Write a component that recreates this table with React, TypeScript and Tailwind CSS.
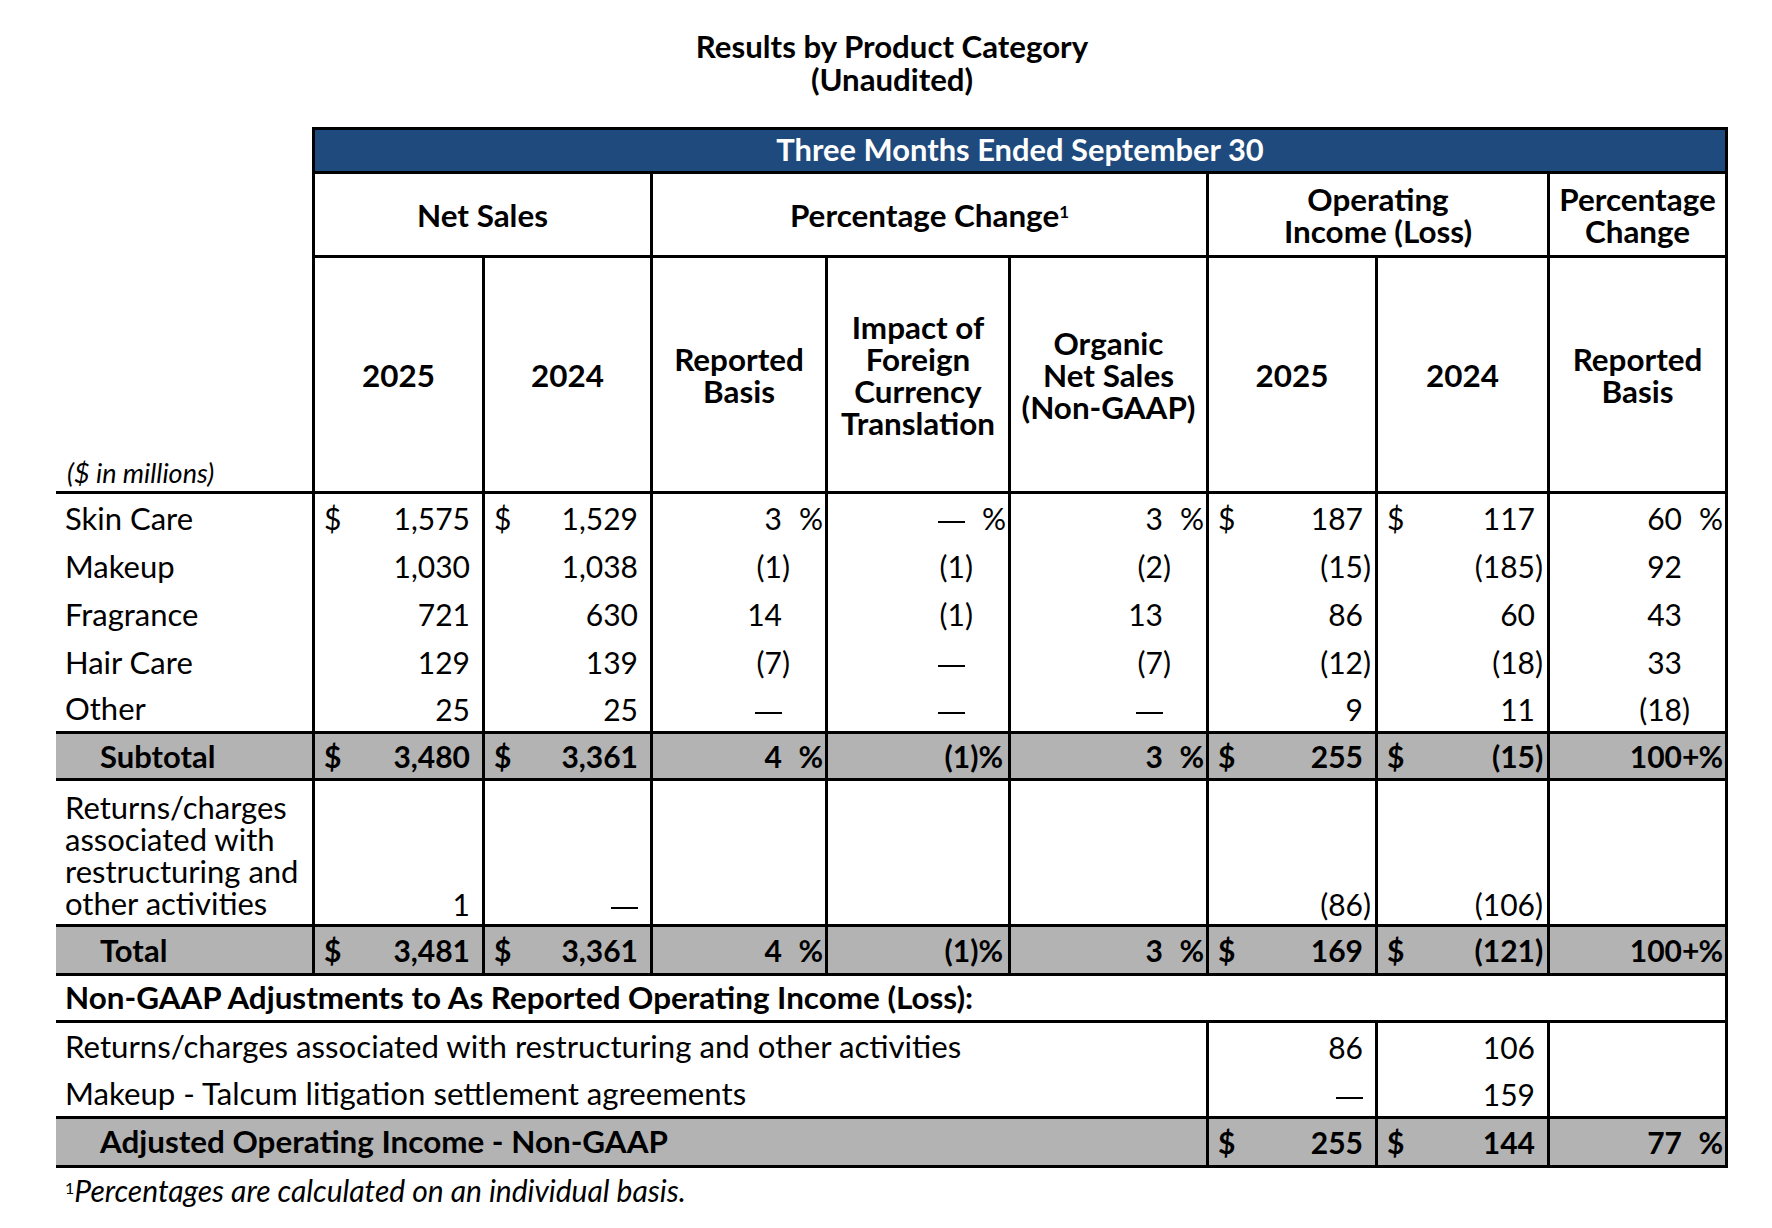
import React from "react";

type Row = {
  label: React.ReactNode;
  v: string[];
  dollar?: boolean;
  pct?: boolean;
  bold?: boolean;
  grey?: boolean;
  bottom?: boolean;
  tall?: boolean;
  indent?: boolean;
};

const PCT_COLS = [2, 3, 4, 7];
const DOLLAR_COLS = [0, 1, 5, 6];

function Dash() {
  return <span className="inline-block w-[27px] h-[2px] bg-black align-middle" />;
}

function ValueCell({
  v,
  dollar,
  pctCol,
  showPct,
  grey,
  bottom,
  tall,
}: {
  v: string;
  dollar: boolean;
  pctCol: boolean;
  showPct: boolean;
  grey?: boolean;
  bottom?: boolean;
  tall?: boolean;
}) {
  let main = v;
  let paren = "";
  if (v.endsWith(")")) {
    main = v.slice(0, -1);
    paren = ")";
  } else if (v.endsWith("+")) {
    main = v.slice(0, -1);
    paren = "+";
  }
  const mainNode = main === "—" ? <Dash /> : main;
  return (
    <div
      className={`flex ${tall ? "items-end pb-[5px]" : "items-center"} pl-[9px] pr-[2px] border-r-[3px] border-black ${
        bottom ? "border-b-[3px]" : ""
      } ${grey ? "bg-[#b3b3b3]" : ""} whitespace-nowrap`}
    >
      {dollar && <span>$</span>}
      {pctCol && showPct && paren === ")" ? (
        <span className="ml-auto pr-[3px]">{v}%</span>
      ) : (
        <>
          <span className="ml-auto">{mainNode}</span>
          <span className="w-[10px] text-left overflow-visible">{paren}</span>
          {pctCol && <span className="w-[31px] text-right">{showPct ? "%" : ""}</span>}
        </>
      )}
    </div>
  );
}

const rows: Row[] = [
  { label: "Skin Care", v: ["1,575", "1,529", "3", "—", "3", "187", "117", "60"], dollar: true, pct: true },
  { label: "Makeup", v: ["1,030", "1,038", "(1)", "(1)", "(2)", "(15)", "(185)", "92"] },
  { label: "Fragrance", v: ["721", "630", "14", "(1)", "13", "86", "60", "43"] },
  { label: "Hair Care", v: ["129", "139", "(7)", "—", "(7)", "(12)", "(18)", "33"] },
  { label: "Other", v: ["25", "25", "—", "—", "—", "9", "11", "(18)"], bottom: true },
  {
    label: "Subtotal",
    v: ["3,480", "3,361", "4", "(1)", "3", "255", "(15)", "100+"],
    dollar: true,
    pct: true,
    bold: true,
    grey: true,
    bottom: true,
    indent: true,
  },
  {
    label: (
      <>
        Returns/charges
        <br />
        associated with
        <br />
        restructuring and
        <br />
        other activities
      </>
    ),
    v: ["1", "—", "", "", "", "(86)", "(106)", ""],
    bottom: true,
    tall: true,
  },
  {
    label: "Total",
    v: ["3,481", "3,361", "4", "(1)", "3", "169", "(121)", "100+"],
    dollar: true,
    pct: true,
    bold: true,
    grey: true,
    bottom: true,
    indent: true,
  },
];

function DataRow({ r }: { r: Row }) {
  return (
    <>
      <div
        className={`flex ${r.tall ? "items-end pb-[5px] leading-[32px]" : "items-center"} ${
          r.indent ? "pl-[44px] text-[31px]" : "pl-[9px] text-[31px]"
        } border-r-[3px] border-black ${r.bottom ? "border-b-[3px]" : ""} ${r.grey ? "bg-[#b3b3b3]" : ""} ${
          r.bold ? "font-bold" : ""
        } whitespace-nowrap`}
      >
        <span>{r.label}</span>
      </div>
      {r.v.map((val, i) => (
        <div key={i} className={`contents ${r.bold ? "font-bold" : ""}`}>
          <ValueCell
            v={val}
            dollar={!!r.dollar && DOLLAR_COLS.includes(i)}
            pctCol={PCT_COLS.includes(i)}
            showPct={!!r.pct && PCT_COLS.includes(i) && val !== ""}
            grey={r.grey}
            bottom={r.bottom}
            tall={r.tall}
          />
        </div>
      ))}
    </>
  );
}

function AdjRow({
  label,
  a,
  b,
  c,
  bold,
  grey,
  bottom,
  dollar,
  pct,
}: {
  label: string;
  a: string;
  b: string;
  c: string;
  bold?: boolean;
  grey?: boolean;
  bottom?: boolean;
  dollar?: boolean;
  pct?: boolean;
}) {
  const common = `${bold ? "font-bold" : ""}`;
  return (
    <>
      <div
        className={`col-span-6 flex items-center ${
          bold ? "pl-[44px] font-bold text-[31.4px]" : "pl-[9px] text-[31.2px]"
        } border-r-[3px] border-black ${bottom ? "border-b-[3px]" : ""} ${grey ? "bg-[#b3b3b3]" : ""} whitespace-nowrap`}
      >
        {label}
      </div>
      <div className={`contents ${common}`}>
        <ValueCell v={a} dollar={!!dollar} pctCol={false} showPct={false} grey={grey} bottom={bottom} />
      </div>
      <div className={`contents ${common}`}>
        <ValueCell v={b} dollar={!!dollar} pctCol={false} showPct={false} grey={grey} bottom={bottom} />
      </div>
      <div className={`contents ${common}`}>
        <ValueCell v={c} dollar={false} pctCol={true} showPct={!!pct} grey={grey} bottom={bottom} />
      </div>
    </>
  );
}

export default function App() {
  const hdr =
    "flex items-center justify-center text-center font-bold text-[31.4px] leading-[32px] border-r-[3px] border-b-[3px] border-black";
  return (
    <div className="w-[1772px] h-[1228px] bg-white text-black font-[Lato,'Open_Sans',sans-serif] text-[30px]">
      <div className="ml-[56px] w-[1672px] pt-[30px]">
        <div className="text-center font-bold text-[31.2px] leading-[33px]">
          <div>Results by Product Category</div>
          <div>(Unaudited)</div>
        </div>
        <div className="mt-[31px] grid grid-cols-[259px_170px_168px_175px_183px_198px_169px_172px_178px] grid-rows-[47px_84px_236px_48px_48px_48px_48px_48px_47px_146px_49px_47px_48px_48px_49px] leading-none">
          {/* label header */}
          <div className="row-span-3 flex items-end pl-[11px] pb-[5px] border-r-[3px] border-b-[3px] border-black">
            <span className="italic text-[27px] leading-[27px]">($ in millions)</span>
          </div>
          {/* blue header */}
          <div className="col-span-8 flex items-center justify-center bg-[#1f4a7d] text-white font-bold text-[30.9px] border-t-[3px] border-b-[3px] border-r-[3px] border-black">
            Three Months Ended September 30
          </div>
          {/* group headers */}
          <div className={`col-span-2 ${hdr}`}>Net Sales</div>
          <div className={`col-span-3 ${hdr}`}>
            <span>
              Percentage Change<sup className="text-[17px]">1</sup>
            </span>
          </div>
          <div className={`col-span-2 ${hdr}`}>
            <span>
              Operating
              <br />
              Income (Loss)
            </span>
          </div>
          <div className={hdr}>
            <span>
              Percentage
              <br />
              Change
            </span>
          </div>
          {/* column headers */}
          <div className={hdr}>2025</div>
          <div className={hdr}>2024</div>
          <div className={hdr}>
            <span>
              Reported
              <br />
              Basis
            </span>
          </div>
          <div className={hdr}>
            <span>
              Impact of
              <br />
              Foreign
              <br />
              Currency
              <br />
              Translation
            </span>
          </div>
          <div className={hdr}>
            <span>
              Organic
              <br />
              Net Sales
              <br />
              (Non-GAAP)
            </span>
          </div>
          <div className={hdr}>2025</div>
          <div className={hdr}>2024</div>
          <div className={hdr}>
            <span>
              Reported
              <br />
              Basis
            </span>
          </div>
          {rows.map((r, i) => (
            <DataRow key={i} r={r} />
          ))}
          {/* Non-GAAP heading */}
          <div className="col-span-9 flex items-center pl-[9px] font-bold text-[31.4px] border-r-[3px] border-b-[3px] border-black whitespace-nowrap">
            Non-GAAP Adjustments to As Reported Operating Income (Loss):
          </div>
          <AdjRow label="Returns/charges associated with restructuring and other activities" a="86" b="106" c="" />
          <AdjRow label="Makeup - Talcum litigation settlement agreements" a="—" b="159" c="" bottom />
          <AdjRow
            label="Adjusted Operating Income - Non-GAAP"
            a="255"
            b="144"
            c="77"
            bold
            grey
            bottom
            dollar
            pct
          />
        </div>
        <div className="mt-[6px] pl-[9px] italic text-[30px] leading-[32px]">
          <sup className="text-[16px] not-italic">1</sup>Percentages are calculated on an individual basis.
        </div>
      </div>
    </div>
  );
}
